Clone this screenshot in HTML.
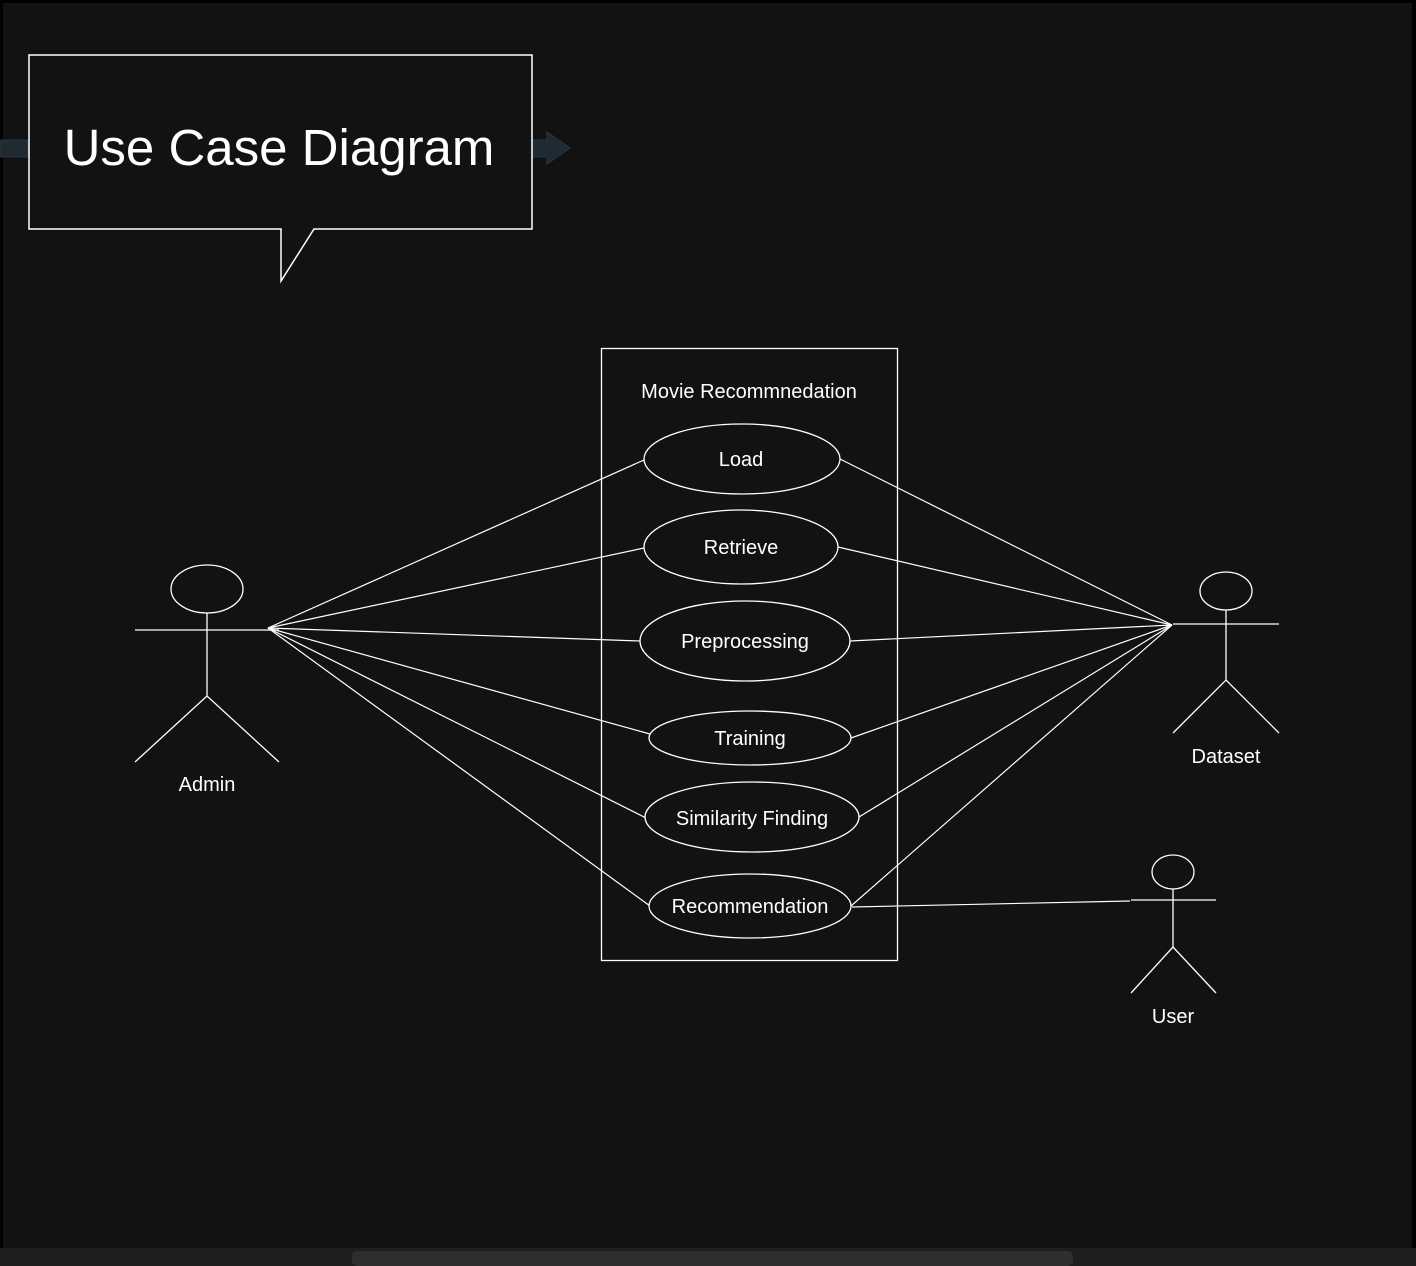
<!DOCTYPE html>
<html><head><meta charset="utf-8"><style>
html,body{margin:0;padding:0;background:#000;}
body{width:1416px;height:1266px;overflow:hidden;position:relative;}
.bg{position:absolute;left:3px;top:3px;width:1409px;height:1245px;background:#121212;}
.bar{position:absolute;left:0;top:1248px;width:1416px;height:18px;background:#1d1e20;}
.thumb{position:absolute;left:352px;top:1251px;width:721px;height:15px;border-radius:5px;background:#2e2e2e;}
svg{position:absolute;left:0;top:0;}
text{font-family:"Liberation Sans",Arial,sans-serif;fill:#fff;text-anchor:middle;}
</style></head><body>
<div class="bg"></div>
<div class="bar"></div><div class="thumb"></div>
<svg width="1416" height="1248" viewBox="0 0 1416 1248">
<g fill="#1f2a33" stroke="#2a3540" stroke-width="1">
<polygon points="0,140 28,140 28,157 0,157"/>
<polygon points="520,140 547,140 547,132 570,148 547,164 547,157 520,157"/>
</g>
<path d="M29,55 H532 V229 H314 L281,281 V229 H29 Z" fill="#121212" stroke="#fff" stroke-width="1.5"/>
<text x="279" y="165" font-size="51" style="text-anchor:middle">Use Case Diagram</text>
<rect x="601.5" y="348.5" width="296" height="612" fill="none" stroke="#fff" stroke-width="1.3"/>
<text x="749" y="398" font-size="20">Movie Recommnedation</text>
<g stroke="#fff" stroke-width="1.2" fill="none">
<line x1="268" y1="628" x2="644" y2="460"/>
<line x1="268" y1="628" x2="644" y2="548"/>
<line x1="268" y1="628" x2="640" y2="641"/>
<line x1="268" y1="628" x2="650" y2="734"/>
<line x1="268" y1="628" x2="646" y2="818"/>
<line x1="268" y1="628" x2="650" y2="906"/>
<line x1="1172" y1="625" x2="840" y2="459"/>
<line x1="1172" y1="625" x2="838" y2="547"/>
<line x1="1172" y1="625" x2="850" y2="641"/>
<line x1="1172" y1="625" x2="851" y2="738"/>
<line x1="1172" y1="625" x2="859" y2="817"/>
<line x1="1172" y1="625" x2="851" y2="906"/>
<line x1="852" y1="907" x2="1130" y2="901"/>
</g>
<g stroke="#fff" stroke-width="1.3" fill="#121212">
<ellipse cx="742" cy="459" rx="98" ry="35"/>
<ellipse cx="741" cy="547" rx="97" ry="37"/>
<ellipse cx="745" cy="641" rx="105" ry="40"/>
<ellipse cx="750" cy="738" rx="101" ry="27"/>
<ellipse cx="752" cy="817" rx="107" ry="35"/>
<ellipse cx="750" cy="906" rx="101" ry="32"/>
</g>
<g font-size="20">
<text x="741" y="466">Load</text>
<text x="741" y="554">Retrieve</text>
<text x="745" y="648">Preprocessing</text>
<text x="750" y="745">Training</text>
<text x="752" y="825">Similarity Finding</text>
<text x="750" y="913">Recommendation</text>
<text x="207" y="791">Admin</text>
<text x="1226" y="763">Dataset</text>
<text x="1173" y="1023">User</text>
</g>
<g stroke="#fff" stroke-width="1.3" fill="none">
<ellipse cx="207" cy="589" rx="36" ry="24"/>
<line x1="135" y1="630" x2="279" y2="630"/>
<line x1="207" y1="613" x2="207" y2="696"/>
<polyline points="135,762 207,696 279,762"/>
<ellipse cx="1226" cy="591" rx="26" ry="19"/>
<line x1="1173" y1="624" x2="1279" y2="624"/>
<line x1="1226" y1="610" x2="1226" y2="680"/>
<polyline points="1173,733 1226,680 1279,733"/>
<ellipse cx="1173" cy="872" rx="21" ry="17"/>
<line x1="1131" y1="900" x2="1216" y2="900"/>
<line x1="1173" y1="889" x2="1173" y2="947"/>
<polyline points="1131,993 1173,947 1216,993"/>
</g>
</svg>
</body></html>
